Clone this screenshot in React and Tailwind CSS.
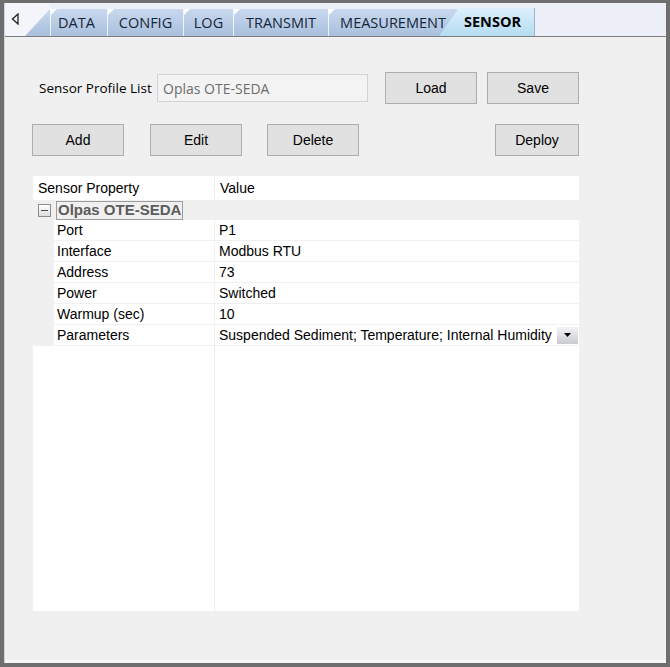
import React from 'react';

const tabs = [
    { label: 'DATA', w: 'w-[57px]' },
    { label: 'CONFIG', w: 'w-[76px]' },
    { label: 'LOG', w: 'w-[50px]' },
    { label: 'TRANSMIT', w: 'w-[95px]' },
    { label: 'MEASUREMENT', w: 'w-[129px]' },
];

const rows = [
    ['Port', 'P1'],
    ['Interface', 'Modbus RTU'],
    ['Address', '73'],
    ['Power', 'Switched'],
    ['Warmup (sec)', '10'],
    ['Parameters', 'Suspended Sediment; Temperature; Internal Humidity'],
];

function WinButton({ children, className = '' }) {
    return (
        <button
            className={`h-[32px] bg-[#e1e1e1] border border-[#adadad] text-[14px] text-black font-['Liberation_Sans',Arial,sans-serif] ${className}`}
        >
            {children}
        </button>
    );
}

function TabStrip() {
    return (
        <div className="flex items-end h-[34px] bg-[#eceef8] border-b border-[#7d7d7d] font-['Open_Sans',sans-serif] text-[14.5px] text-[#16263a]">
            {/* scroll arrow area */}
            <div className="relative w-[45px] h-full bg-[#f4f5fa] flex items-center pl-[6px]">
                <svg width="8" height="12" viewBox="0 0 8 12" className="mb-[2px]">
                    <path d="M7 1 L1.5 6 L7 11 Z" fill="none" stroke="#222" strokeWidth="1.3" />
                </svg>
            </div>
            <div className="relative -ml-[25px] w-[25px] h-[27px] bg-[linear-gradient(#c8d9ee,#a9bfdc)] [clip-path:polygon(100%_0,100%_100%,0_100%)]" />
            {tabs.map((t, i) => (
                <div
                    key={t.label}
                    className={`relative ${t.w} h-[27px] flex items-center ${i === 0 ? 'justify-start pl-[7px]' : 'justify-center'} bg-[linear-gradient(#c8d9ee,#a9bfdc)] border-l border-white/80`}
                >
                    <span className="absolute left-0 top-0 w-0 h-0 border-t-[6px] border-t-white border-r-[6px] border-r-transparent" />
                    {t.label}
                </div>
            ))}
            <div className="relative -ml-[18px] w-[20px] h-[28px] bg-[linear-gradient(#dcf0fb,#b5dcf1)] [clip-path:polygon(100%_0,100%_100%,0_100%)]" />
            <div className="w-[76px] h-[28px] flex items-center pl-[5px] bg-[linear-gradient(#dcf0fb,#b5dcf1)] border-r border-[#9fb4c8] font-bold text-black">
                SENSOR
            </div>
        </div>
    );
}

function PropertyGrid() {
    return (
        <div className="mt-[20px] ml-[28px] w-[546px] h-[435px] bg-white flex flex-col font-['Liberation_Sans',Arial,sans-serif] text-[14px] text-black">
            <div className="flex h-[24px] items-center">
                <div className="w-[182px] pl-[5px] h-full flex items-center border-r border-[#ececec]">Sensor Property</div>
                <div className="pl-[5px]">Value</div>
            </div>
            <div className="flex h-[20px] items-center bg-[#f0f0f0]">
                <div className="w-[21px] flex justify-center pl-[1px]">
                    <div className="w-[13px] h-[13px] border border-[#8e8e8e] bg-[linear-gradient(#ffffff,#dcdcdc)] flex items-center justify-center">
                        <div className="w-[7px] h-px bg-[#4a4a4a]" />
                    </div>
                </div>
                <div className="ml-[2px] h-[19px] px-[1px] border border-[#9c9c9c] flex items-center font-bold text-[#5c5c5c] text-[15px]">
                    Olpas OTE-SEDA
                </div>
            </div>
            {rows.map(([k, v]) => (
                <div key={k} className="flex h-[21px]">
                    <div className="w-[21px] bg-[#f0f0f0]" />
                    <div className="flex flex-1 border-b border-[#f0f0f0]">
                        <div className="w-[161px] pl-[3px] flex items-center border-r border-[#f0f0f0]">{k}</div>
                        <div className="flex-1 pl-[4px] flex items-center justify-between">
                            <span>{v}</span>
                            {k === 'Parameters' && (
                                <span className="mr-px w-[21px] h-[17px] bg-[linear-gradient(#f4f4f6,#c9c9d2)] flex items-center justify-center">
                                    <svg width="7" height="4" viewBox="0 0 7 4">
                                        <path d="M0 0 H7 L3.5 4 Z" fill="#000" />
                                    </svg>
                                </span>
                            )}
                        </div>
                    </div>
                </div>
            ))}
            <div className="flex flex-1">
                <div className="w-[182px] border-r border-[#ececec]" />
            </div>
        </div>
    );
}

export default function App() {
    return (
        <div className="w-[670px] h-[667px] bg-[#6e6e6e] pt-[3px] pl-[4px] pr-[4px] pb-[4px]">
            <div className="w-full h-full flex flex-col bg-[#f0f0f0] border-l border-[#c9d5e3]">
                <TabStrip />
                <div className="flex-1 flex flex-col border-b-[3px] border-[#f7f7f7]">
                    <div className="mt-[35px] pl-[34px] flex items-center">
                        <span className="w-[118px] text-[13.5px] text-black font-['Open_Sans',sans-serif]">Sensor Profile List</span>
                        <div className="w-[211px] h-[28px] bg-[#f3f3f3] border border-[#d2d2d2] flex items-center pl-[5px] text-[14px] text-[#6d6d6d] font-['Open_Sans',sans-serif]">
                            Oplas OTE-SEDA
                        </div>
                        <WinButton className="ml-[17px] w-[92px]">Load</WinButton>
                        <WinButton className="ml-[10px] w-[92px]">Save</WinButton>
                    </div>
                    <div className="mt-[20px] pl-[27px] flex items-center">
                        <WinButton className="w-[92px]">Add</WinButton>
                        <WinButton className="ml-[26px] w-[92px]">Edit</WinButton>
                        <WinButton className="ml-[25px] w-[92px]">Delete</WinButton>
                        <WinButton className="ml-[136px] w-[84px]">Deploy</WinButton>
                    </div>
                    <PropertyGrid />
                </div>
            </div>
        </div>
    );
}
